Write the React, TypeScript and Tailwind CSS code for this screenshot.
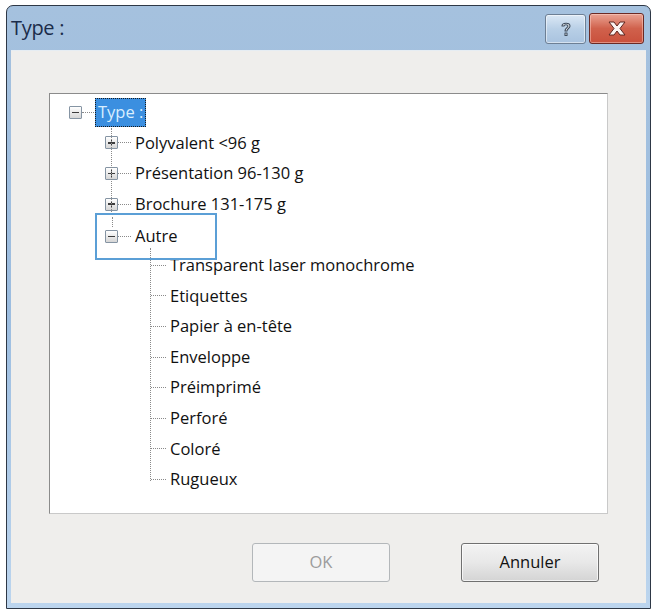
import React from "react";

const ROW = 30.6;

type Item = { label: string; level: 0 | 1 | 2; toggle?: "plus" | "minus" };

const items: Item[] = [
  { label: "Type :", level: 0, toggle: "minus" },
  { label: "Polyvalent <96 g", level: 1, toggle: "plus" },
  { label: "Présentation 96-130 g", level: 1, toggle: "plus" },
  { label: "Brochure 131-175 g", level: 1, toggle: "plus" },
  { label: "Autre", level: 1, toggle: "minus" },
  { label: "Transparent laser monochrome", level: 2 },
  { label: "Etiquettes", level: 2 },
  { label: "Papier à en-tête", level: 2 },
  { label: "Enveloppe", level: 2 },
  { label: "Préimprimé", level: 2 },
  { label: "Perforé", level: 2 },
  { label: "Coloré", level: 2 },
  { label: "Rugueux", level: 2 },
];

function Toggle({ kind }: { kind: "plus" | "minus" }) {
  return (
    <div className="relative w-[13px] h-[13px] border border-[#8594a3] rounded-[1px] bg-gradient-to-b from-white to-[#d6d6d6] flex items-center justify-center">
      <div className="w-[7px] h-[1.5px] bg-[#3c3c3c]" />
      {kind === "plus" && <div className="absolute w-[1.5px] h-[7px] bg-[#3c3c3c]" />}
    </div>
  );
}

function HDots({ w }: { w: number }) {
  return <div className="border-t border-dotted border-[#8a8a8a]" style={{ width: w }} />;
}

function TreeRow({ item }: { item: Item }) {
  if (item.level === 0) {
    return (
      <div className="relative flex items-center" style={{ height: ROW }}>
        <div className="ml-[19px]">
          <Toggle kind="minus" />
        </div>
        <HDots w={12} />
        <div className="ml-[1px] h-[29px] px-[2px] flex items-center bg-[#3b8fe0] border border-dotted border-[#1b1b1b] text-[#d9eeff]">
          {item.label}
        </div>
      </div>
    );
  }
  if (item.level === 1) {
    // the open "Autre" node sits inside a framed callout that spills over its neighbours
    if (item.label === "Autre") {
      return (
        <div className="relative" style={{ height: ROW }}>
          <div className="absolute left-[45px] top-[-6px] w-[122px] h-[47px] z-10 bg-white border-2 border-[#5b9fd6] flex items-center pb-[1px]">
            <div className="ml-[8px]">
              <Toggle kind={item.toggle ?? "minus"} />
            </div>
            <HDots w={13} />
            <span className="ml-[4px]">{item.label}</span>
            <div className="absolute left-[15px] top-[2px] h-[10px] border-l border-dotted border-[#8a8a8a]" />
            <div className="absolute left-[53px] top-[33px] h-[10px] border-l border-dotted border-[#8a8a8a]" />
          </div>
        </div>
      );
    }
    return (
      <div className="relative flex items-center" style={{ height: ROW }}>
        <div className="ml-[55px]">
          <Toggle kind={item.toggle ?? "plus"} />
        </div>
        <HDots w={13} />
        <span className="ml-[4px]">{item.label}</span>
      </div>
    );
  }
  return (
    <div className="relative flex items-center" style={{ height: ROW }}>
      <div className="ml-[101px]">
        <HDots w={15} />
      </div>
      <span className="ml-[4px]">{item.label}</span>
    </div>
  );
}

function HelpButton() {
  return (
    <div className="w-[41px] h-[30px] rounded-[3px] border border-[#6d7f94] bg-gradient-to-b from-[#dbe8f5] via-[#b8cfe6] to-[#a9c3df] flex items-center justify-center shadow-[inset_0_0_0_1px_rgba(255,255,255,0.5)]">
      <svg width="14" height="18" viewBox="0 0 14 18">
        <path
          d="M3 6 C3 2.5 11 2 11 6 C11 8.5 8 8.5 8 11 L6 11 C6 8 9 7.5 9 6 C9 4.3 5 4.3 5 6 Z M6 13 L8 13 L8 15.5 L6 15.5 Z"
          fill="#f2f5f8"
          stroke="#3f4c5c"
          strokeWidth="1.1"
          strokeLinejoin="round"
        />
      </svg>
    </div>
  );
}

function CloseButton() {
  return (
    <div className="w-[55px] h-[31px] rounded-[3px] border border-[#6b2a24] bg-gradient-to-b from-[#e9a393] via-[#d0614c] to-[#c9503c] flex items-center justify-center shadow-[inset_0_0_0_1px_rgba(255,220,210,0.45)]">
      <svg width="22" height="17" viewBox="0 0 22 17">
        <path
          d="M3 2 L8 2 L11 6 L14 2 L19 2 L14 8.5 L19 15 L14 15 L11 11 L8 15 L3 15 L8 8.5 Z"
          fill="#fbf3f1"
          stroke="#5e2620"
          strokeWidth="1"
          strokeLinejoin="round"
        />
      </svg>
    </div>
  );
}

export default function App() {
  return (
    <div className="w-[654px] h-[612px] bg-white pt-[5px] pl-[6px]" style={{ fontFamily: '"Open Sans", "Noto Sans", sans-serif' }}>
      <div className="w-[645px] h-[604px] rounded-t-[7px] border border-[#2e3846] bg-gradient-to-b from-[#a5c1de] via-[#9cbde0] to-[#bcd5ee] flex flex-col overflow-hidden">
        {/* title bar */}
        <div className="h-[44px] flex items-center pl-[4px] pr-[6px]">
          <span className="text-[20px] text-[#1b2c4a] tracking-[-0.3px]">Type :</span>
          <div className="ml-auto flex items-center gap-[3px] mt-[1px]">
            <HelpButton />
            <CloseButton />
          </div>
        </div>

        {/* client area */}
        <div className="mx-[4px] mb-[5px] flex-1 bg-[#efeeec] border-t border-[#e6edf3] flex flex-col">
          <div className="ml-[38px] mt-[42px] w-[559px] h-[421px] bg-white border border-[#8b8b8b] border-r-[#c9c9c9] border-b-[#c9c9c9] relative">
            <div className="pt-[3px] text-[16.5px] text-[#111] leading-none">
              {items.map((it) => (
                <TreeRow key={it.label} item={it} />
              ))}
            </div>
            {/* connector lines */}
            <div className="absolute left-[61px] top-[34px] h-[90px] border-l border-dotted border-[#8a8a8a]" />
            <div className="absolute left-[100px] top-[165px] h-[222px] border-l border-dotted border-[#8a8a8a]" />
          </div>

          <div className="mt-[29px] flex justify-end pr-[47px] gap-[71px] text-[16.5px]">
            <div className="w-[138px] h-[39px] rounded-[3px] border border-[#b3b7ba] bg-[#f4f4f4] flex items-center justify-center text-[#9c9c9c]">
              OK
            </div>
            <div className="w-[138px] h-[39px] rounded-[3px] border border-[#707070] bg-gradient-to-b from-[#f3f3f3] via-[#e8e8e8] to-[#d4d4d4] flex items-center justify-center text-[#111] shadow-[inset_0_0_0_1px_rgba(255,255,255,0.7)]">
              Annuler
            </div>
          </div>
        </div>
      </div>
    </div>
  );
}
